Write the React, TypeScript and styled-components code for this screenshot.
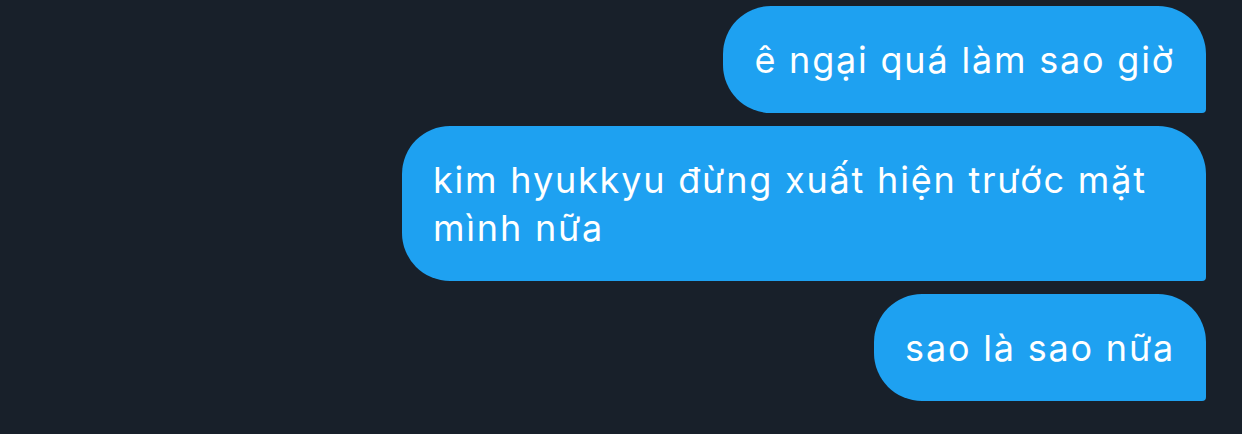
import React from "react";
import styled, { createGlobalStyle } from "styled-components";

const Global = createGlobalStyle`
  html, body { margin: 0; padding: 0; background: #18202a; }
  body { width: 1242px; height: 434px; overflow: hidden; }
`;

const Thread = styled.div`
  display: flex;
  flex-direction: column;
  align-items: flex-end;
  gap: 13px;
  padding: 6px 36px 0 0;
  background: #18202a;
  height: 434px;
  box-sizing: border-box;
`;

const Bubble = styled.div`
  box-sizing: border-box;
  max-width: 804px;
  padding: 30px 31px 29px 31px;
  background: #1ea1f1;
  color: #ffffff;
  font-family: Inter, "Noto Sans", sans-serif;
  font-size: 36px;
  letter-spacing: 1.8px;
  line-height: 48px;
  border-radius: 48px 48px 4px 48px;
`;

const messages = [
  "ê ngại quá làm sao giờ",
  "kim hyukkyu đừng xuất hiện trước mặt mình nữa",
  "sao là sao nữa",
];

export default function App() {
  return (
    <>
      <Global />
      <Thread>
        {messages.map((m) => (
          <Bubble key={m}>{m}</Bubble>
        ))}
      </Thread>
    </>
  );
}
